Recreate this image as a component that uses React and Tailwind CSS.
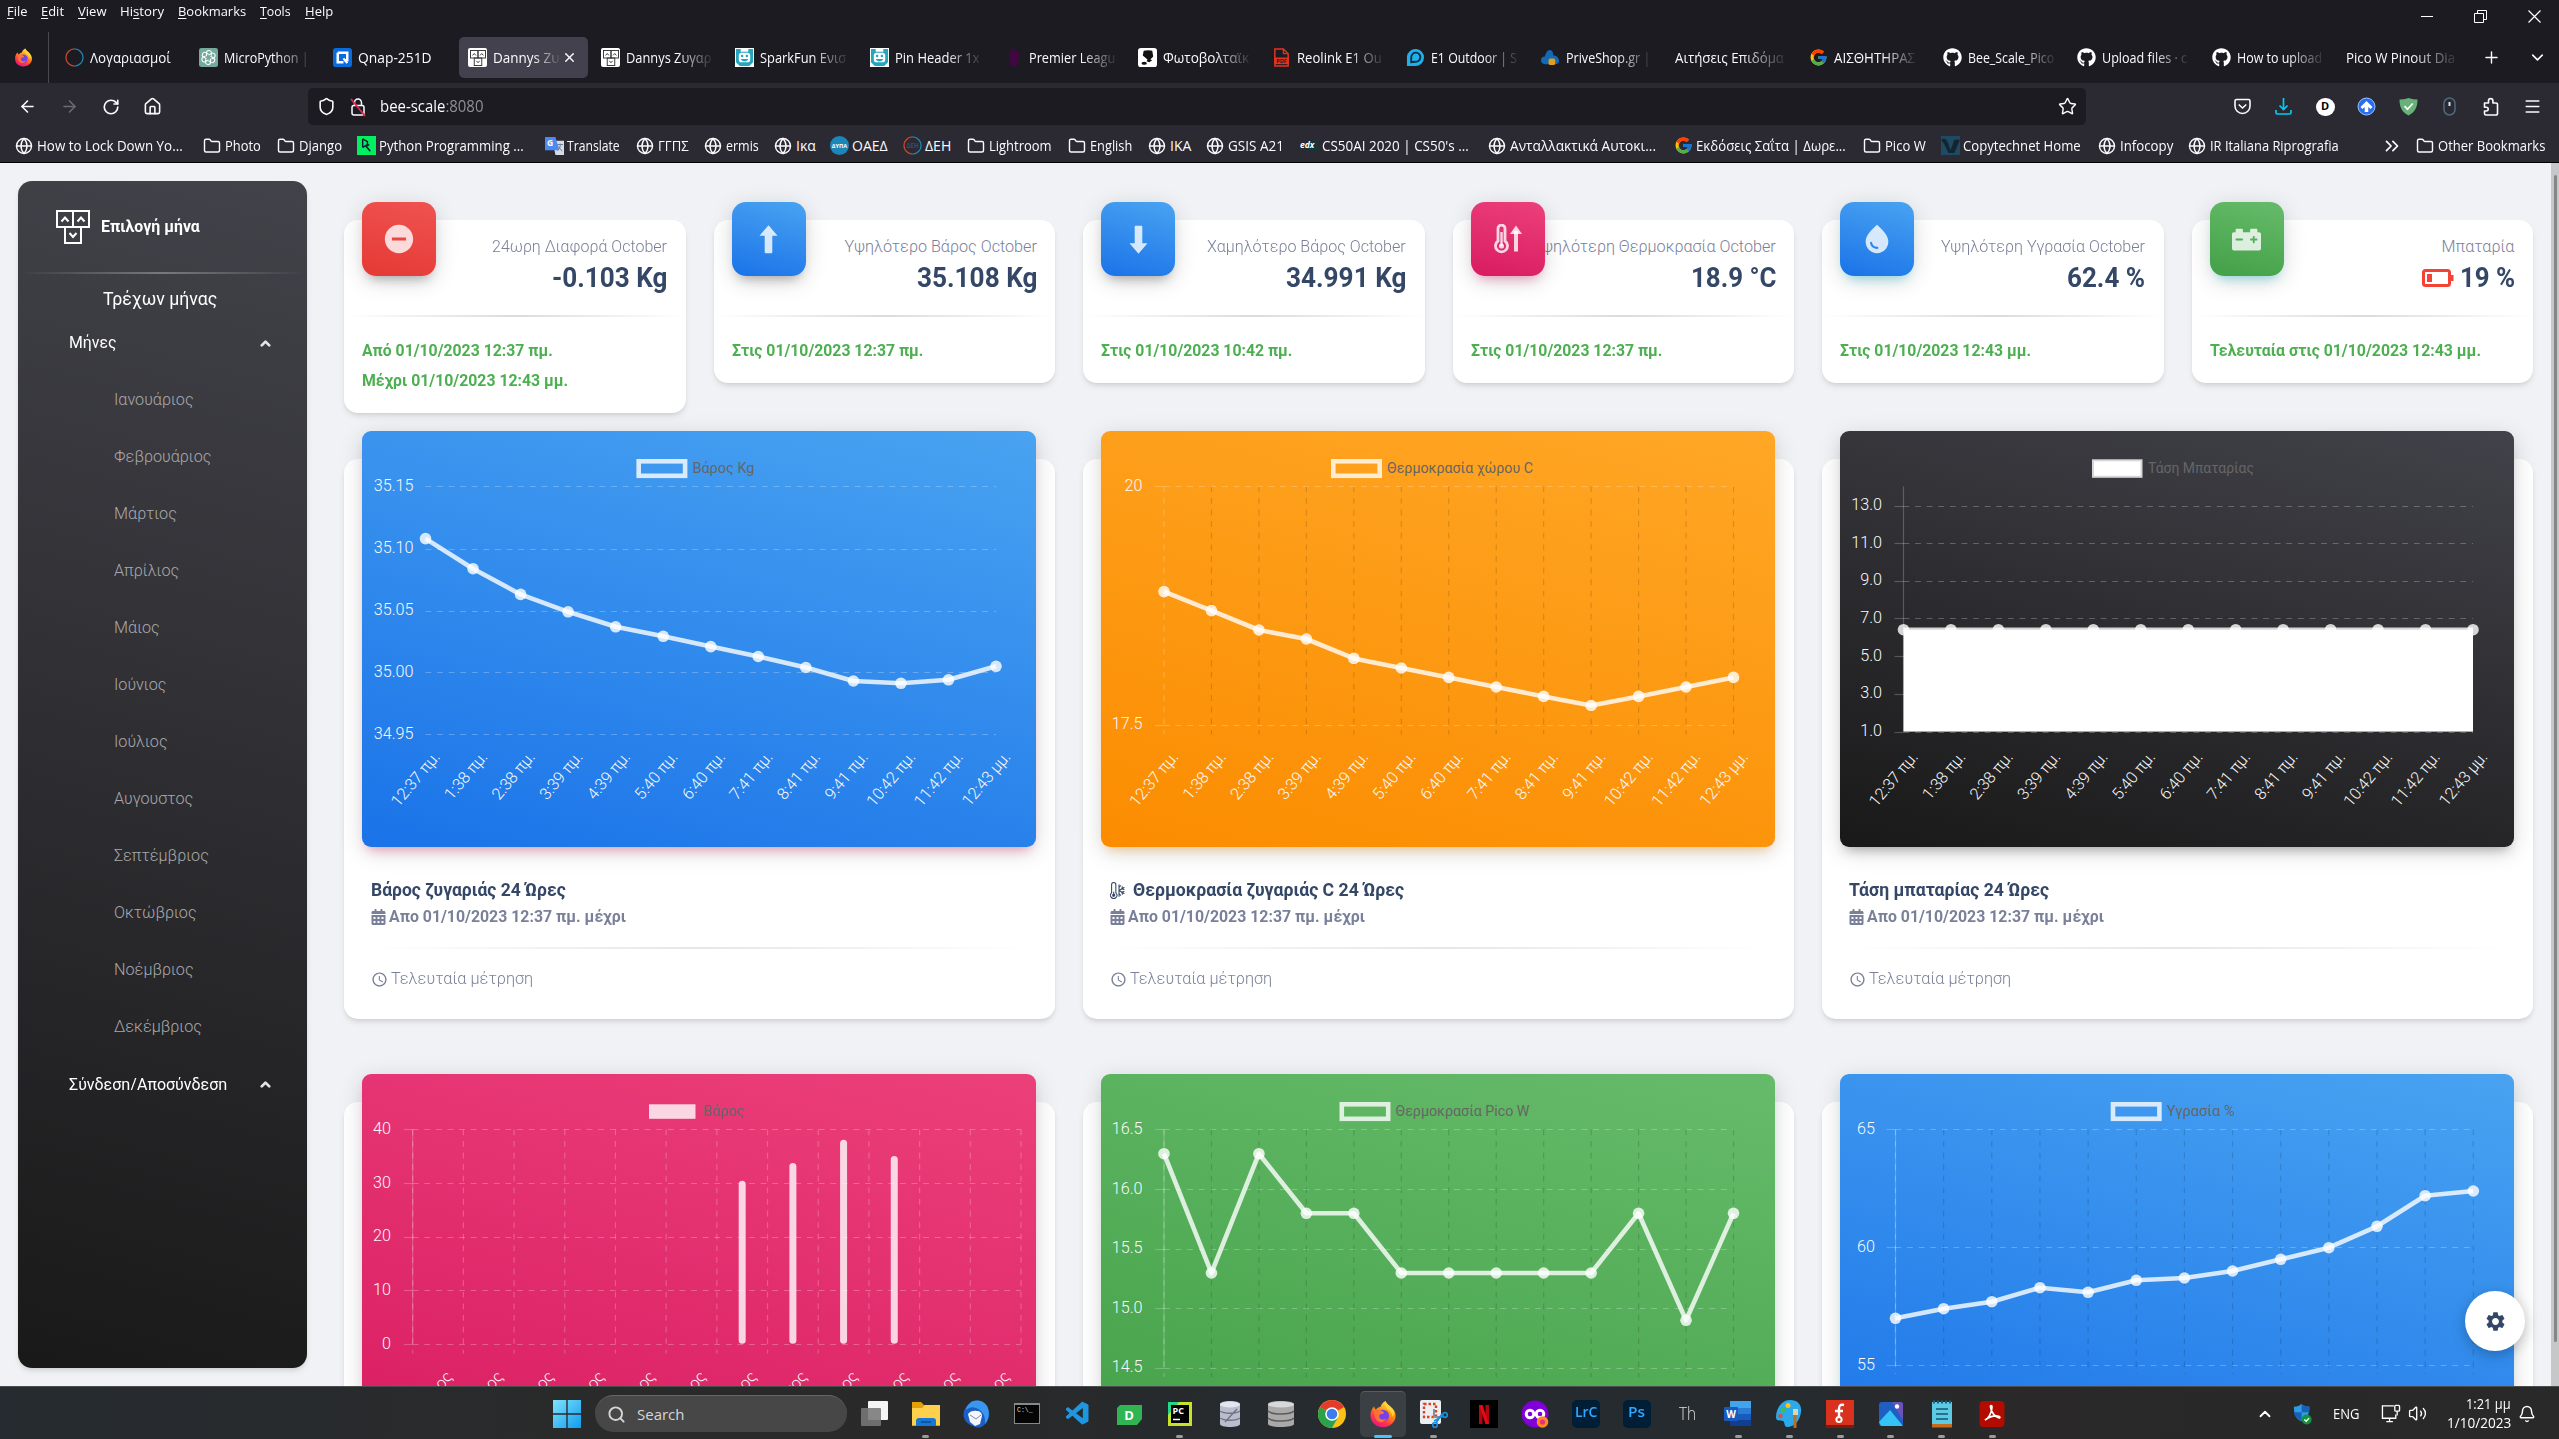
import React, { useLayoutEffect, useRef } from "react";
import {
  ArrowLeft, ArrowRight, RotateCw, House, Star, Plus, ChevronDown, ChevronUp, X, Menu, Globe, Folder,
  ChevronsRight, Search, Bell, Volume2, Shield,
} from "lucide-react";
import { FaGithub, FaCarBattery, FaCalendarAlt } from "react-icons/fa";
import { FcGoogle } from "react-icons/fc";
import { MdRemoveCircle, MdWaterDrop, MdSettings, MdSchedule } from "react-icons/md";
import { BsThermometerSnow } from "react-icons/bs";
import { VscVscode } from "react-icons/vsc";

/* Text squeezed or stretched to a known width. */
function Fit({ w, className = "", children }) {
  const ref = useRef(null);
  useLayoutEffect(() => {
    const el = ref.current;
    el.style.transform = `scaleX(${w / el.offsetWidth})`;
  }, [w]);
  return (
    <span className="inline-block shrink-0 whitespace-nowrap" style={{ width: w }}>
      <span ref={ref} className={`inline-block origin-left whitespace-nowrap ${className}`}>{children}</span>
    </span>
  );
}

/* ---------- small drawings ---------- */
const ScaleLogo = ({ className }) => (
  <svg viewBox="0 0 34 34" className={className} fill="none" stroke="currentColor" strokeWidth="2">
    <rect x="1" y="1" width="16" height="16" />
    <rect x="17" y="1" width="16" height="16" />
    <rect x="9" y="17" width="16" height="16" />
    <path d="M5.500 11.500 9 7.500l3.500 4M21.500 11.500 25 7.500l3.500 4M13.500 23l3.500 4 3.500-4" />
  </svg>
);

const Firefox = ({ className }) => (
  <svg viewBox="0 0 32 32" className={className}>
    <defs>
      <linearGradient id="fx" x1="0.8" y1="0" x2="0.3" y2="1">
        <stop offset="0" stopColor="#fff44f" />
        <stop offset="0.4" stopColor="#ff980e" />
        <stop offset="0.75" stopColor="#ff3647" />
        <stop offset="1" stopColor="#e31587" />
      </linearGradient>
    </defs>
    <path d="M19 1c1 4 5 5 8 9 3 3 4 7 3 11-2 6-7 10-14 10S3 27 2 20c-1-5 1-10 4-13 0 2 1 3 2 4 1-2 3-3 5-3 1-3 3-6 6-7z" fill="url(#fx)" />
    <circle cx="16" cy="18" r="7" fill="#7542e5" />
    <path d="M6 12c4-2 7 0 10 1 2 1 1 3-1 3-3 0-4 2-3 4 1 3 5 3 8 1-2 5-9 6-12 1-2-3-2-7-2-10z" fill="#ff7139" />
    <path d="M19 1c1 4 5 5 8 9 2 3 2 7 0 9-1-5-4-7-6-9-3-3-3-6-2-9z" fill="#ffd43a" />
  </svg>
);

const Ring = ({ className, label }) => (
  <svg viewBox="0 0 20 20" className={className}>
    <path d="M10 1a9 9 0 0 0 0 18" fill="none" stroke="#c9472b" strokeWidth="1.4" />
    <path d="M10 1a9 9 0 0 1 0 18" fill="none" stroke="#1d86b5" strokeWidth="1.4" />
    {label && <text x="10" y="12.500" fontSize="6.500" fill="#24536e" textAnchor="middle" fontFamily="Open Sans" fontWeight="700">ΔΕΗ</text>}
  </svg>
);

const OpenAi = ({ className }) => (
  <svg viewBox="0 0 20 20" className={className}>
    <rect width="20" height="20" rx="2.500" fill="#74aa9c" />
    <g fill="none" stroke="#fff" strokeWidth="1.1">
      {[0, 60, 120, 180, 240, 300].map((a) => (
        <path key={a} d="M10 7.500 13 5.800a2.600 2.600 0 0 1 2.800 4.400L13 11.700" transform={`rotate(${a} 10 10)`} />
      ))}
    </g>
  </svg>
);

const Spark = ({ className }) => (
  <svg viewBox="0 0 20 20" className={className}>
    <rect width="20" height="20" fill="#fff" />
    <path d="M1 1h5v3h8V1h5v14l-4 4H5l-4-4z" fill="#27a5bf" />
    <rect x="4" y="5" width="12" height="10" rx="3" fill="#fff" />
    <circle cx="7.500" cy="8.500" r="1.300" fill="#27a5bf" />
    <circle cx="12.500" cy="8.500" r="1.300" fill="#27a5bf" />
    <path d="M6 11.500h8c-1 3.500-7 3.500-8 0z" fill="#27a5bf" />
  </svg>
);

const TabIcon = ({ kind }) => {
  const c = "w-[19px] h-[19px] shrink-0";
  switch (kind) {
    case "ring": return <Ring className={c} />;
    case "ai": return <OpenAi className={c} />;
    case "qnap":
      return (
        <svg viewBox="0 0 20 20" className={c}>
          <rect width="20" height="20" rx="3" fill="#0a6cdc" />
          <path d="M5 5h10v8h-3M5 5v10h6" fill="none" stroke="#fff" strokeWidth="2.600" />
          <path d="m11 11 4 5" stroke="#fff" strokeWidth="2.200" />
        </svg>
      );
    case "scale":
      return (
        <span className={`${c} flex items-center justify-center rounded-[2px] bg-white text-[#333]`}>
          <ScaleLogo className="h-[16px] w-[16px]" />
        </span>
      );
    case "spark": return <Spark className={c} />;
    case "lion":
      return (
        <svg viewBox="0 0 20 20" className={c}>
          <path d="M7 4 6 1l3 2 1-3 1.500 3L14 1v4c3 2 3 5 1 7l-1 6-4 2-4-3 1-4C4 11 5 6 7 4z" fill="#420742" />
        </svg>
      );
    case "bulb":
      return (
        <svg viewBox="0 0 20 20" className={c}>
          <rect width="20" height="20" rx="3" fill="#fff" />
          <path d="M6 3c3-1 7-1 9 0l1 6-3 3 2 1-3 2-3-1 1-2-5-4z" fill="#111" />
          <ellipse cx="6.500" cy="16" rx="2.800" ry="1.600" fill="#111" />
        </svg>
      );
    case "pdf":
      return (
        <svg viewBox="0 0 20 20" className={c}>
          <path d="M3 1h9l5 5v13H3z" fill="none" stroke="#e2341d" strokeWidth="1.600" />
          <path d="M12 1v5h5" fill="none" stroke="#e2341d" strokeWidth="1.400" />
          <rect x="2.500" y="10" width="15" height="7" fill="#e2341d" />
          <text x="10" y="15.800" fontSize="5.800" fontWeight="700" textAnchor="middle" fill="#1c1b22" fontFamily="Open Sans">PDF</text>
        </svg>
      );
    case "reo":
      return (
        <svg viewBox="0 0 20 20" className={c}>
          <path d="M1 19V9a9 9 0 1 1 9 10z" fill="#1fb0ee" />
          <path d="M5.500 15V9.500A4.800 4.800 0 1 1 10 14.500z" fill="none" stroke="#12313f" strokeWidth="2" />
          <circle cx="10" cy="9.500" r="2" fill="#1fb0ee" />
        </svg>
      );
    case "prive":
      return (
        <svg viewBox="0 0 20 20" className={c}>
          <path d="M9 2c3 0 4 3 4 6 3 0 6 2 6 6 0 2-2 3-4 3H4c-2 0-4-1-4-4 0-3 2-4 4-4 1-4 3-7 5-7z" fill="#1269b5" />
          <rect x="8" y="11" width="7" height="7" rx="2" fill="#e59b1c" />
        </svg>
      );
    case "google": return <FcGoogle className={c} />;
    case "github": return <FaGithub className={`${c} text-white`} />;
    default: return null;
  }
};

const TABS = [
  ["ring", "Λογαριασμοί", 81], ["ai", "MicroPython |", 85, 1], ["qnap", "Qnap-251D", 73.5], ["scale", "Dannys Ζυ", 66, 1, 1],
  ["scale", "Dannys Ζυγαρ", 85, 1], ["spark", "SparkFun Ενισ", 86, 1], ["spark", "Pin Header 1x", 85, 1],
  ["lion", "Premier Leagu", 86, 1], ["bulb", "Φωτοβολταϊκ", 86, 1], ["pdf", "Reolink E1 Ou", 85, 1],
  ["reo", "E1 Outdoor | S", 86, 1], ["prive", "PriveShop.gr |", 84, 1], [null, "Αιτήσεις Επιδόμα", 109, 1],
  ["google", "ΑΙΣΘΗΤΗΡΑΣ", 81, 1], ["github", "Bee_Scale_Pico", 86, 1], ["github", "Upload files · c", 85, 1],
  ["github", "How to upload", 85, 1], [null, "Pico W Pinout Dia", 109, 1],
];

const MENUS = [
  ["F", "ile", "", 20, "w-[34px]"], ["E", "dit", "", 23, "w-[37px]"], ["V", "iew", "", 29, "w-[42px]"],
  ["s", "tory", "Hi", 44, "w-[58px]"], ["B", "ookmarks", "", 68, "w-[82px]"], ["T", "ools", "", 31, "w-[45px]"],
  ["H", "elp", "", 28, "w-[40px]"],
];

const BOOKMARKS = [
  ["globe", "How to Lock Down Yo...", 146, "w-[188px]"], ["folder", "Photo", 36, "w-[74px]"],
  ["folder", "Django", 43, "w-[80px]"], ["dc", "Python Programming ...", 145, "w-[188px]"],
  ["translate", "Translate", 53, "w-[91px]"], ["globe", "ΓΓΠΣ", 31, "w-[68px]"], ["globe", "ermis", 33, "w-[70px]"],
  ["globe", "Ικα", 20, "w-[56px]"], ["oaed", "ΟΑΕΔ", 36, "w-[73px]"], ["deh", "ΔΕΗ", 26, "w-[64px]"],
  ["folder", "Lightroom", 63, "w-[101px]"], ["folder", "English", 42, "w-[80px]"], ["globe", "IKA", 21, "w-[58px]"],
  ["globe", "GSIS A21", 56, "w-[94px]"], ["edx", "CS50AI 2020 | CS50's ...", 147, "w-[188px]"],
  ["globe", "Ανταλλακτικά Αυτοκι...", 146, "w-[186px]"], ["google", "Εκδόσεις Σαΐτα | Δωρε...", 150, "w-[189px]"],
  ["folder", "Pico W", 41, "w-[78px]"], ["copy", "Copytechnet Home", 118, "w-[157px]"],
  ["globe", "Infocopy", 53, "w-[90px]"], ["globe", "IR Italiana Riprografia", 129, "w-[196px]"],
];

const BookmarkIcon = ({ kind }) => {
  const c = "w-[19px] h-[19px] shrink-0";
  switch (kind) {
    case "globe": return <Globe className="h-[18px] w-[18px] shrink-0" strokeWidth={1.9} />;
    case "folder": return <Folder className="h-[18px] w-[18px] shrink-0" strokeWidth={1.9} />;
    case "dc":
      return (
        <svg viewBox="0 0 20 20" className={c}>
          <rect width="20" height="20" fill="#03ef62" />
          <path d="M6 3v9M6 3l5 3v3l-5 3M9 11l4-2M9 10l5 6" fill="none" stroke="#05192d" strokeWidth="1.500" />
        </svg>
      );
    case "translate":
      return (
        <svg viewBox="0 0 20 20" className={c}>
          <path d="M8 5h12v15h-9z" fill="#d7dbe2" />
          <path d="M0 1h11l4 14H0z" fill="#4a8af4" />
          <text x="5.500" y="11" fontSize="9" fill="#fff" textAnchor="middle" fontFamily="Open Sans" fontWeight="700">G</text>
          <path d="M13 9h6M16 8v2c0 2-1 4-3 5M14 11l4 5" stroke="#68788f" fill="none" />
        </svg>
      );
    case "oaed":
      return (
        <svg viewBox="0 0 20 20" className={c}>
          <circle cx="10" cy="10" r="10" fill="#1c86b8" />
          <text x="10" y="12.500" fontSize="6" fill="#fff" textAnchor="middle" fontFamily="Open Sans" fontWeight="700">ΔΥΠΑ</text>
        </svg>
      );
    case "deh": return <Ring className={c} label />;
    case "edx":
      return (
        <svg viewBox="0 0 20 20" className={c}>
          <path d="M8 5h11v11H8z" fill="#14363b" />
          <text x="0" y="13" fontSize="9" fill="#fff" fontFamily="Open Sans" fontStyle="italic" fontWeight="700">edx</text>
        </svg>
      );
    case "google": return <FcGoogle className={c} />;
    case "copy":
      return (
        <svg viewBox="0 0 20 20" className={c}>
          <rect width="20" height="20" fill="#1f4a63" />
          <path d="M0 4c4-3 7 1 8 5l2 6 4-11h6l-6 14H8L3 8z" fill="#132630" />
        </svg>
      );
    default: return null;
  }
};

function BrowserChrome() {
  return (
    <div className="flex h-[163px] shrink-0 flex-col bg-[#1c1b22] font-['Open_Sans',sans-serif] text-[14.500px] text-[#fbfbfe]">
      <div className="flex h-[32px] justify-between">
        <div className="flex h-[23px] items-center pl-[7px] text-[13.500px]">
          {MENUS.map(([u, rest, pre, w, cls]) => (
            <div key={rest} className={cls}>
              <Fit w={w}>{pre}<span className="underline underline-offset-2">{u}</span>{rest}</Fit>
            </div>
          ))}
        </div>
        <div className="flex items-center gap-[41px] pr-[18px]">
          <span className="h-px w-[12px] bg-white" />
          <svg viewBox="0 0 13 13" className="h-[13px] w-[13px]" fill="none" stroke="#fff">
            <path d="M.5 3.500h9v9h-9zM3.500 3.500v-3h9v9h-3" />
          </svg>
          <svg viewBox="0 0 13 13" className="h-[13px] w-[13px]" fill="none" stroke="#fff" strokeWidth="1.200">
            <path d="m.5.5 12 12M12.500.5l-12 12" />
          </svg>
        </div>
      </div>
      <div className="flex h-[51px] items-center">
        <div className="flex h-full w-[49px] shrink-0 items-center border-r border-[#4a4953] pl-[14px]">
          <Firefox className="h-[19px] w-[19px]" />
        </div>
        <div className="flex pl-[5.500px]">
          {TABS.map(([icon, label, w, fade, active], i) => (
            <div key={i} className="w-[134.200px] shrink-0 pl-[2px] pr-[3px]">
              <div className={`flex h-[41px] items-center rounded-[5px] ${active ? "bg-[#42414d] pl-[9px]" : "pl-[8px]"}`}>
                {icon && <span className="mr-[6px] flex"><TabIcon kind={icon} /></span>}
                <div className={fade ? "[mask-image:linear-gradient(to_right,black_60%,rgba(0,0,0,0.1))]" : ""}>
                  <Fit w={w}>{label}</Fit>
                </div>
                {active && <X className="ml-[3px] h-[15px] w-[15px] shrink-0" strokeWidth={2.2} />}
              </div>
            </div>
          ))}
        </div>
        <Plus className="ml-[12px] h-[19px] w-[19px]" strokeWidth={1.8} />
        <ChevronDown className="ml-[27px] h-[19px] w-[19px]" strokeWidth={2} />
      </div>
      <div className="flex h-[46px] shrink-0 items-center bg-[#2b2a33] pt-px">
        <div className="flex w-[308px] shrink-0 items-center gap-[23px] pl-[18px]">
          <ArrowLeft className="h-[19px] w-[19px]" strokeWidth={2} />
          <ArrowRight className="h-[19px] w-[19px] text-[#6c6b74]" strokeWidth={2} />
          <RotateCw className="h-[18px] w-[18px]" strokeWidth={2.2} />
          <House className="h-[19px] w-[19px]" strokeWidth={2} />
        </div>
        <div className="flex h-[37px] w-[1778px] shrink-0 items-center rounded-[5px] bg-[#1c1b22] pl-[9px] pr-[9px]">
          <Shield className="h-[19px] w-[19px]" strokeWidth={2} />
          <svg viewBox="0 0 18 20" className="ml-[13px] h-[20px] w-[18px]" fill="none">
            <rect x="3" y="8.500" width="12" height="9.500" rx="2" stroke="#fbfbfe" strokeWidth="1.500" />
            <path d="M5.500 8V5.500a3.500 3.500 0 0 1 7 0V8" stroke="#fbfbfe" strokeWidth="1.500" />
            <path d="m2 2 14 17" stroke="#e22850" strokeWidth="1.800" />
          </svg>
          <span className="ml-[13px] text-[15.500px]"><Fit w={103}>bee-scale<span className="text-[#8f8f97]">:8080</span></Fit></span>
          <Star className="ml-auto h-[19px] w-[19px]" strokeWidth={1.8} />
        </div>
        <div className="flex flex-1 items-center justify-end gap-[22.500px] pr-[17px]">
          <svg viewBox="0 0 19 19" className="h-[19px] w-[19px]" fill="none" stroke="#fbfbfe" strokeWidth="1.600">
            <path d="M3.500 2.500h12a1.500 1.500 0 0 1 1.500 1.500v5a7.500 7.500 0 0 1-15 0V4a1.500 1.500 0 0 1 1.500-1.500zM5.700 7.500l3.800 3.500 3.800-3.500" />
          </svg>
          <svg viewBox="0 0 19 19" className="h-[19px] w-[19px]" fill="none" stroke="#00ccf5" strokeWidth="1.700">
            <path d="M9.500 1v11M5.500 8.500l4 4 4-4M2 13v2.500A1.500 1.500 0 0 0 3.500 17h12a1.500 1.500 0 0 0 1.500-1.500V13" />
          </svg>
          <span className="flex h-[18px] w-[19px] items-center justify-center rounded-full bg-white text-[11px] font-bold text-black">D</span>
          <svg viewBox="0 0 19 19" className="h-[19px] w-[19px]">
            <circle cx="9.500" cy="9.500" r="8.500" fill="#2a6df0" stroke="#9cc4f6" />
            <path d="m3.500 10 6-6 6 6-2 2-2.200-2V15H7.700v-5l-2.200 2z" fill="#fff" />
          </svg>
          <svg viewBox="0 0 19 19" className="h-[19px] w-[19px]">
            <path d="M.5 2.500c3 0 6-.5 9-1.500 3 1 6 1.500 9 1.500 0 7-2 12.500-9 16-7-3.500-9-9-9-16z" fill="#67b279" />
            <path d="m5.500 9 3 3.200 5.200-5.700" fill="none" stroke="#fff" strokeWidth="1.700" />
          </svg>
          <svg viewBox="0 0 19 19" className="h-[19px] w-[19px]" fill="none">
            <rect x="4" y="1" width="11" height="17" rx="5.500" stroke="#4d6b7d" strokeWidth="1.500" />
            <path d="M9.500 5v4" stroke="#dce6ec" strokeWidth="2" />
          </svg>
          <svg viewBox="0 0 19 19" className="h-[19px] w-[19px]" fill="none" stroke="#fbfbfe" strokeWidth="1.600" strokeLinejoin="round">
            <path d="M2.500 6h4V3.800a2.200 2.200 0 0 1 4.400 0V6H14a1.500 1.500 0 0 1 1.500 1.500v9A1.500 1.500 0 0 1 14 18H4a1.500 1.500 0 0 1-1.500-1.500V14h1.800a1.900 1.900 0 0 0 0-3.800H2.500z" />
          </svg>
          <Menu className="h-[19px] w-[19px]" strokeWidth={1.8} />
        </div>
      </div>
      <div className="flex h-[34px] items-center border-b border-black bg-[#2b2a33] pl-[14.500px] text-[14px]">
        {BOOKMARKS.map(([icon, label, w, cls]) => (
          <div key={label} className={`flex shrink-0 items-center ${cls}`}>
            <span className="flex w-[22.500px] shrink-0"><BookmarkIcon kind={icon} /></span>
            <Fit w={w}>{label}</Fit>
          </div>
        ))}
        <ChevronsRight className="-ml-[3px] h-[22px] w-[22px]" strokeWidth={1.9} />
        <div className="ml-[13px] flex items-center">
          <span className="w-[22px]"><BookmarkIcon kind="folder" /></span>
          <Fit w={107}>Other Bookmarks</Fit>
        </div>
      </div>
    </div>
  );
}

/* ---------- sidebar ---------- */
const MONTHS = ["Ιανουάριος", "Φεβρουάριος", "Μάρτιος", "Απρίλιος", "Μάιος", "Ιούνιος", "Ιούλιος", "Αυγουστος", "Σεπτέμβριος", "Οκτώβριος", "Νοέμβριος", "Δεκέμβριος"];

function Sidebar() {
  return (
    <aside className="ml-[18px] mt-[18px] flex h-[1187px] w-[289px] shrink-0 flex-col rounded-[14px] bg-[linear-gradient(195deg,#42424a,#191919)] text-[16.500px] text-white shadow-md">
      <div className="flex h-[91px] items-center pl-[38px] pt-px">
        <ScaleLogo className="h-[34px] w-[34px]" />
        <span className="ml-[11px]"><Fit w={99} className="text-[16.200px] font-bold">Επιλογή μήνα</Fit></span>
      </div>
      <div className="h-[2px] shrink-0 bg-[linear-gradient(90deg,transparent,rgba(255,255,255,0.3),transparent)]" />
      <div className="flex h-[51px] items-center pl-[85px] pt-px"><Fit w={114} className="text-[18.500px]">Τρέχων μήνας</Fit></div>
      <div className="flex h-[36px] items-center justify-between pl-[51px] pr-[34px]">
        <Fit w={48}>Μήνες</Fit>
        <ChevronUp className="h-[15px] w-[15px] text-[#e4e4e4]" strokeWidth={4.5} />
      </div>
      <div className="flex flex-col pt-[11px] font-light text-[#a9a9ab]">
        {MONTHS.map((m) => (
          <div key={m} className="flex h-[57px] items-center pl-[96px] text-[16.200px]">{m}</div>
        ))}
      </div>
      <div className="mt-[14px] h-[20px] overflow-hidden">
        <div className="flex h-[30px] items-center justify-between pl-[51px] pr-[34px]">
          <Fit w={158}>Σύνδεση/Αποσύνδεση</Fit>
          <ChevronUp className="mb-[2px] h-[15px] w-[15px] text-[#e4e4e4]" strokeWidth={4.5} />
        </div>
      </div>
    </aside>
  );
}

/* ---------- stat cards ---------- */
const Divider = ({ className = "" }) => (
  <div className={`h-[1.500px] bg-[linear-gradient(90deg,transparent,rgba(0,0,0,0.14),transparent)] ${className}`} />
);

const ArrowBold = ({ className }) => (
  <svg viewBox="0 0 20 30" className={className} fill="currentColor">
    <path d="M10 0 19.500 11H14v17.500a1 1 0 0 1-1 1H7a1 1 0 0 1-1-1V11H.5z" />
  </svg>
);

const ThermoUp = ({ className }) => (
  <svg viewBox="0 0 30 30" className={className} fill="none" stroke="currentColor">
    <path d="M5 4.500a3.500 3.500 0 0 1 7 0V17a6 6 0 1 1-7 0z" strokeWidth="2.800" />
    <circle cx="8.500" cy="22" r="2.600" fill="currentColor" stroke="none" />
    <path d="M8.500 8v14" strokeWidth="2.400" />
    <path d="M23 27.500V7" strokeWidth="4" />
    <path d="m23 1.500 6 8.500H17z" fill="currentColor" stroke="none" />
  </svg>
);

const BLUE = "bg-[linear-gradient(195deg,#49a3f1,#1a73e8)]";
const PINK = "bg-[linear-gradient(195deg,#ec407a,#d81b60)]";
const GREEN = "bg-[linear-gradient(195deg,#66bb6a,#43a047)]";
const RED = "bg-[linear-gradient(195deg,#ef5350,#e53935)]";
const ORANGE = "bg-[linear-gradient(195deg,#ffa726,#fb8c00)]";
const DARK = "bg-[linear-gradient(195deg,#42424a,#191919)]";
const SH_DARK = "shadow-[0_5px_23px_0_rgba(0,0,0,0.14),0_8px_12px_-6px_rgba(64,64,64,0.4)]";
const SH_PINK = "shadow-[0_5px_23px_0_rgba(0,0,0,0.14),0_8px_12px_-6px_rgba(233,30,99,0.4)]";
const SH_CYAN = "shadow-[0_5px_23px_0_rgba(0,0,0,0.14),0_8px_12px_-6px_rgba(0,188,212,0.4)]";
const SH_ORANGE = "shadow-[0_5px_23px_0_rgba(0,0,0,0.14),0_8px_12px_-6px_rgba(255,152,0,0.4)]";
const SH_GREEN = "shadow-[0_5px_23px_0_rgba(0,0,0,0.14),0_8px_12px_-6px_rgba(76,175,80,0.4)]";

const STATS = [
  { bg: RED, sh: SH_DARK, icon: <MdRemoveCircle className="h-[34px] w-[34px]" />, label: "24ωρη Διαφορά October", lw: 175, value: "-0.103 Kg", vw: 115, lines: [["Από 01/10/2023 12:37 πμ.", 191], ["Μέχρι 01/10/2023 12:43 μμ.", 206]] },
  { bg: BLUE, sh: SH_DARK, icon: <ArrowBold className="h-[29px] w-[19px]" />, label: "Υψηλότερο Βάρος October", lw: 192, value: "35.108 Kg", vw: 120, lines: [["Στις 01/10/2023 12:37 πμ.", 191]] },
  { bg: BLUE, sh: SH_DARK, icon: <ArrowBold className="h-[29px] w-[19px] rotate-180" />, label: "Χαμηλότερο Βάρος October", lw: 199, value: "34.991 Kg", vw: 120, lines: [["Στις 01/10/2023 10:42 πμ.", 191]] },
  { bg: PINK, sh: SH_PINK, icon: <ThermoUp className="h-[30px] w-[30px]" />, label: "Υψηλότερη Θερμοκρασία October", lw: 243, value: "18.9 °C", vw: 85, lines: [["Στις 01/10/2023 12:37 πμ.", 191]] },
  { bg: BLUE, sh: SH_CYAN, icon: <MdWaterDrop className="h-[34px] w-[34px]" />, label: "Υψηλότερη Υγρασία October", lw: 204, value: "62.4 %", vw: 78, lines: [["Στις 01/10/2023 12:43 μμ.", 191]] },
  { bg: GREEN, sh: SH_CYAN, icon: <FaCarBattery className="h-[29px] w-[29px]" />, label: "Μπαταρία", lw: 73, value: "19 %", vw: 55, battery: true, lines: [["Τελευταία στις 01/10/2023 12:43 μμ.", 271]] },
];

function StatCard({ s }) {
  return (
    <div className="relative rounded-[14px] bg-white shadow-md">
      <div className="flex h-[95px] flex-col items-end pr-[18.500px] pt-[14px]">
        <div className="flex h-[26px] items-center text-[16.200px] font-light text-[#7b809a]"><Fit w={s.lw}>{s.label}</Fit></div>
        <div className="flex h-[36px] items-center text-[27.700px] font-bold text-[#344767]">
          {s.battery && (
            <svg viewBox="0 0 32 18" className="mr-[6px] h-[18px] w-[32px] text-[#f44335]" fill="none" stroke="currentColor">
              <rect x="1.500" y="1.500" width="26" height="15" rx="2" strokeWidth="3" />
              <path d="M30 6v6" strokeWidth="3" />
              <path d="M7.500 5v8" strokeWidth="5" />
            </svg>
          )}
          <Fit w={s.vw}>{s.value}</Fit>
        </div>
      </div>
      <Divider />
      <div className="px-[18px] pb-[17px] pt-[19.500px] text-[16.200px] font-bold text-[#4caf50]">
        {s.lines.map(([t, w]) => (
          <div key={t} className="flex h-[30px] items-center"><Fit w={w}>{t}</Fit></div>
        ))}
      </div>
      <div className={`absolute -top-[18px] left-[18px] flex h-[74px] w-[74px] items-center justify-center rounded-[14px] text-white/80 ${s.bg} ${s.sh}`}>
        {s.icon}
      </div>
    </div>
  );
}

/* ---------- charts ---------- */
const TIMES = ["12:37 πμ.", "1:38 πμ.", "2:38 πμ.", "3:39 πμ.", "4:39 πμ.", "5:40 πμ.", "6:40 πμ.", "7:41 πμ.", "8:41 πμ.", "9:41 πμ.", "10:42 πμ.", "11:42 πμ.", "12:43 μμ."];

const CHARTS = [
  {
    id: "weight", bg: BLUE, sh: SH_PINK, title: "Βάρος ζυγαριάς 24 Ώρες", tw: 195, xLabels: TIMES,
    legend: "Βάρος Kg", lx: 274.4, lw: 62, x0: 63.5, x1: 634, top: 55.4, bottom: 303.4, labelX: 51.5,
    ys: [["35.15", 55.4], ["35.10", 117.5], ["35.05", 179.5], ["35.00", 241.4], ["34.95", 303.4]],
    pts: [107.6, 137.7, 163.4, 180.8, 195.8, 205.3, 215.6, 225.5, 236.5, 250, 252.3, 248.8, 235.3],
  },
  {
    id: "temp", bg: ORANGE, sh: SH_ORANGE, title: "Θερμοκρασία ζυγαριάς C 24 Ώρες", tw: 271, thermo: true, vgrid: "dark", ticks: true, xLabels: TIMES,
    legend: "Θερμοκρασία χώρου C", lx: 230, lw: 146, x0: 63, x1: 632.5, top: 55.4, bottom: 303.4, labelX: 41.5,
    ys: [["20", 55.4], ["17.5", 293.5]],
    pts: [160.6, 179.6, 199, 208, 227.4, 237, 246.4, 256, 265.4, 274.5, 265.4, 256, 246.4],
  },
  {
    id: "volt", bg: DARK, sh: SH_DARK, title: "Τάση μπαταρίας 24 Ώρες", tw: 200, ticks: true, area: true, axis: true, xLabels: TIMES,
    legend: "Τάση Μπαταρίας", lx: 252, lw: 106, x0: 63.5, x1: 633, top: 55.4, bottom: 300.6, labelX: 42,
    ys: [["13.0", 74.5], ["11.0", 112.4], ["9.0", 149.5], ["7.0", 187.4], ["5.0", 225], ["3.0", 262.5], ["1.0", 300.5]],
    pts: Array(13).fill(198.7),
  },
  {
    id: "months", bg: PINK, sh: SH_PINK, ticks: true, bars: true, axis: true, vgrid: "light", xLabels: MONTHS,
    legend: "Βάρος", lx: 285, lw: 41, x0: 50.7, x1: 659, top: 55.4, bottom: 279.5, labelX: 29,
    ys: [["40", 55.4], ["30", 109.4], ["20", 162.7], ["10", 216.4], ["0", 270.4]],
    pts: [],
  },
  {
    id: "pico", bg: GREEN, sh: SH_GREEN, ticks: true, vgrid: "dark", axis: true, xLabels: [],
    legend: "Θερμοκρασία Pico W", lx: 238.5, lw: 134, x0: 63, x1: 632.5, top: 55.4, bottom: 303, labelX: 41.5,
    ys: [["16.5", 55.4], ["16.0", 115.4], ["15.5", 174.6], ["15.0", 234.4], ["14.5", 293.5]],
    pts: [79.7, 199, 79.7, 139.3, 139.3, 199, 199, 199, 199, 199, 139.3, 246.3, 139.3],
  },
  {
    id: "humid", bg: BLUE, sh: SH_CYAN, ticks: true, vgrid: "dark", axis: true, xLabels: [],
    legend: "Υγρασία %", lx: 270.7, lw: 68, x0: 55.5, x1: 633.3, top: 55.4, bottom: 300, labelX: 35,
    ys: [["65", 55.4], ["60", 173.4], ["55", 291.4]],
    pts: [244.3, 234.7, 227.7, 213.7, 218.3, 206.3, 204, 197, 185.3, 173.7, 152.3, 121.7, 117],
  },
];

const BARS = [[6, 106.7], [7, 89], [8, 65.7], [9, 82]];

function Chart({ c }) {
  const n = 12;
  const step = (c.x1 - c.x0) / n;
  const px = (i) => c.x0 + step * i;
  const filled = c.area || c.bars;
  return (
    <svg viewBox="0 0 674 416" className="h-[416px] w-[674px] font-['Roboto',sans-serif]">
      {filled ? (
        <rect x={c.lx + 2} y="30.300" width="46.500" height="14.500" fill={c.area ? "#fff" : "rgba(255,255,255,.8)"} stroke={c.area ? "rgba(255,255,255,.8)" : "none"} strokeWidth="4" />
      ) : (
        <rect x={c.lx + 2.3} y="30.300" width="46.400" height="14.500" fill="none" stroke="rgba(255,255,255,.8)" strokeWidth="4.600" />
      )}
      <text x={c.lx + 56} y="41.500" fontSize="14.500" fill="#666" textLength={c.lw} lengthAdjust="spacingAndGlyphs">{c.legend}</text>
      {c.ys.map(([t, y]) => (
        <g key={t}>
          <path d={`M${c.x0} ${Math.round(y) + 0.5}H${c.x1}`} stroke="rgba(255,255,255,.25)" strokeWidth="1.200" strokeDasharray="5.800 5.800" />
          {c.ticks && <path d={`M${c.x0 - 9} ${Math.round(y) + 0.5}H${c.x0}`} stroke="rgba(255,255,255,.22)" strokeWidth="1.200" />}
          <text x={c.labelX} y={y + 4.5} fontSize="16.200" fontWeight="300" fill="#f8f9fa" textAnchor="end">{t}</text>
        </g>
      ))}
      {c.vgrid && Array.from({ length: n + 1 }, (_, i) => (
        <path key={i} d={`M${px(i)} ${c.top}V${c.bottom}`} strokeWidth="1.200" strokeDasharray="5.800 5.800"
          stroke={c.vgrid === "light" || i === 0 ? "rgba(255,255,255,.22)" : "rgba(0,0,0,.14)"} />
      ))}
      {c.axis && <path d={`M${c.x0} ${c.top}V${c.area ? c.bottom : c.ys[c.ys.length - 1][1]}`} stroke="rgba(255,255,255,.22)" strokeWidth="1.200" />}
      {c.area && <rect x={c.x0} y="198.700" width={c.x1 - c.x0} height={300.6 - 198.7} fill="#fff" />}
      {c.pts.length > 0 && (
        <polyline points={c.pts.map((y, i) => `${px(i)},${y}`).join(" ")} fill="none" stroke="rgba(255,255,255,.8)" strokeWidth="4.600" strokeLinejoin="round" />
      )}
      {c.pts.map((y, i) => <circle key={i} cx={px(i)} cy={y} r="5.800" fill="rgba(255,255,255,.8)" />)}
      {c.bars && BARS.map(([i, y]) => (
        <rect key={i} x={px(i + 0.5) - 3.5} y={y} width="7" height={269.8 - y} rx="3.500" fill="rgba(255,255,255,.8)" />
      ))}
      {c.xLabels.map((t, i) => {
        const x = px(c.bars ? i + 0.5 : i) + 12;
        const y = c.bars ? 300 : 323.5;
        return (
          <text key={t} x={x} y={y} transform={`rotate(-50 ${x} ${y})`} dominantBaseline="middle" textAnchor="end" fontSize="16.200" fontWeight="300" fill="#f8f9fa">{t}</text>
        );
      })}
    </svg>
  );
}

function ChartCard({ c }) {
  return (
    <div className="h-[560px] rounded-[14px] bg-white px-[18px] shadow-md">
      <div className={`relative -mt-[28px] h-[416px] w-[674px] rounded-[9px] ${c.bg} ${c.sh}`}><Chart c={c} /></div>
      {c.title && (
        <div className="px-[9px] pt-[30px] text-[#7b809a]">
          <div className="flex h-[27px] items-center text-[18.500px] font-bold text-[#344767]">
            {c.thermo && <BsThermometerSnow className="mr-[6px] h-[17px] w-[17px]" />}
            <Fit w={c.tw}>{c.title}</Fit>
          </div>
          <div className="flex h-[26px] items-center pt-px text-[16.200px] font-bold">
            <FaCalendarAlt className="mb-px mr-[3px] h-[16px] w-[15px]" />
            <Fit w={237}>Απο 01/10/2023 12:37 πμ. μέχρι</Fit>
          </div>
          <Divider className="mt-[17px] opacity-70" />
          <div className="mt-[16px] flex h-[30px] items-center text-[16.200px] font-light">
            <MdSchedule className="mr-[3px] h-[17px] w-[17px]" />
            <Fit w={142}>Τελευταία μέτρηση</Fit>
          </div>
        </div>
      )}
    </div>
  );
}

/* ---------- taskbar ---------- */
const Sq = ({ children, className = "" }) => (
  <span className={`flex h-[28px] w-[28px] items-center justify-center ${className}`}>{children}</span>
);

const TASKS = [
  { k: "view", el: <svg viewBox="0 0 28 28" className="h-7 w-7"><rect x="7" y="1" width="20" height="19" rx="1" fill="#f4f4f4" /><rect x="0" y="8" width="20" height="18" rx="1" fill="#777" fillOpacity=".88" /></svg> },
  { k: "files", dot: 1, el: <svg viewBox="0 0 28 28" className="h-7 w-7"><path d="M0 2h9l3 3h16v21H0z" fill="#e3a008" /><path d="M0 8h10l3-3h15v20H0z" fill="#ffd04c" /><path d="M4 26v-5a3 3 0 0 1 3-3h14a3 3 0 0 1 3 3v5z" fill="#1478d4" /><path d="M9 22h10" stroke="#0b4c8c" strokeWidth="1.500" /></svg> },
  { k: "tbird", el: <svg viewBox="0 0 28 28" className="h-7 w-7"><path d="M8 3c5-4 13-3 17 3 4 7 3 15-4 20-3 2-7 2-10 0C4 24 0 18 2 11c1-3 3-6 6-8z" fill="#1c5fc4" /><path d="M8 3c5-4 13-3 17 3 3 6 2 13-2 18 1-8-3-14-9-16C10 6 6 8 4 10c0-3 2-5 4-7z" fill="#3a96ee" /><path d="M6 14c2-3 6-4 9-3 3 0 5 2 5 5l-2 8-5 2-5-4z" fill="#f4f6fb" /><path d="m8 15 6 4 5-4" fill="none" stroke="#5b6ea0" strokeWidth=".8" /></svg> },
  { k: "term", el: <svg viewBox="0 0 28 28" className="h-7 w-7"><rect x="1" y="3" width="26" height="21" fill="#888" /><rect x="2" y="5" width="24" height="18" fill="#050505" /><text x="4" y="12" fontSize="6.500" fill="#ddd" fontFamily="Liberation Mono">C:\_</text></svg> },
  { k: "code", el: <VscVscode className="h-[28px] w-[28px] text-[#1e96e0]" /> },
  { k: "dash", el: <svg viewBox="0 0 28 28" className="h-7 w-7"><path d="M5 5h22v14l-5 6H2V8z" fill="#2fb552" /><text x="14" y="19.500" fontSize="13" fontWeight="700" textAnchor="middle" fill="#fff" fontFamily="Open Sans">D</text></svg> },
  { k: "pycharm", dot: 1, el: <svg viewBox="0 0 28 28" className="h-7 w-7"><path d="M2 2h24v24H2z" fill="#c6e32a" /><path d="M2 2h11L2 15z" fill="#21d789" /><rect x="5" y="5" width="18" height="18" fill="#000" /><text x="6.500" y="14" fontSize="9" fontWeight="700" fill="#fff" fontFamily="Open Sans">PC</text><path d="M7 19.500h7" stroke="#fff" strokeWidth="1.500" /></svg> },
  { k: "db1", el: <svg viewBox="0 0 28 28" className="h-7 w-7"><path d="M4 4c0-4 20-4 20 0v20c0 4-20 4-20 0z" fill="#b9bdcc" /><ellipse cx="14" cy="4.500" rx="10" ry="3" fill="#e3e6f0" /><path d="M4 11c4 3 16 3 20 0M4 18c4 3 16 3 20 0M9 22l12-13" stroke="#6d7285" fill="none" strokeWidth="1.300" /></svg> },
  { k: "db2", el: <svg viewBox="0 0 28 28" className="h-7 w-7"><path d="M1 4c0-4 26-4 26 0v20c0 4-26 4-26 0z" fill="#a9a9a9" /><ellipse cx="14" cy="4.500" rx="13" ry="3" fill="#d8d8d8" /><path d="M1 11c4 4 22 4 26 0M1 18c4 4 22 4 26 0" stroke="#5c5c5c" fill="none" strokeWidth="1.600" /></svg> },
  { k: "chrome", el: <svg viewBox="0 0 28 28" className="h-7 w-7"><circle cx="14" cy="14" r="14" fill="#fbc116" /><path d="M14 14 1.900 7A14 14 0 0 1 26.100 7z" fill="#e33b2e" /><path d="M14 14 1.900 7a14 14 0 0 0 12 21l6-10.500z" fill="#2aa14c" /><circle cx="14" cy="14" r="6.800" fill="#fff" /><circle cx="14" cy="14" r="5.300" fill="#3b7ded" /></svg> },
  { k: "firefox", active: 1, el: <Firefox className="h-[28px] w-[28px]" /> },
  { k: "snip", dot: 1, el: <svg viewBox="0 0 28 28" className="h-7 w-7"><rect x="0" y="0" width="21" height="24" rx="2" fill="#eceff2" /><path d="M4 4h12v13H4z" fill="none" stroke="#d9431e" strokeWidth="2.400" strokeDasharray="2.500 2" /><path d="M14 9v8h6" fill="none" stroke="#8a8f94" strokeWidth="2" /><circle cx="15" cy="25" r="2.300" fill="none" stroke="#1a8fdc" strokeWidth="1.700" /><circle cx="25" cy="15" r="2.300" fill="none" stroke="#1a8fdc" strokeWidth="1.700" /><path d="M16 23l6-9M23 16l-9 5" stroke="#1a8fdc" strokeWidth="1.700" /></svg> },
  { k: "netflix", el: <svg viewBox="0 0 28 28" className="h-7 w-7"><rect width="28" height="28" fill="#000" /><path d="M9 5h3.500v19H9z" fill="#b20710" /><path d="M15.500 5H19v19h-3.500z" fill="#b20710" /><path d="M9 5h3.500L19 24h-3.500z" fill="#e50914" /></svg> },
  { k: "purple", el: <svg viewBox="0 0 28 28" className="h-7 w-7"><circle cx="14" cy="14" r="13.500" fill="#8000d7" /><circle cx="9" cy="14" r="3.800" fill="none" stroke="#fff" strokeWidth="3" /><circle cx="19" cy="14" r="3.800" fill="none" stroke="#fff" strokeWidth="3" /><circle cx="21.500" cy="22" r="5.800" fill="#ff8a1f" /><circle cx="21.500" cy="22" r="2.600" fill="#e3317f" /></svg> },
  { k: "lrc", el: <Sq className="rounded-[5px] bg-[#001e36] pb-[3px] text-[14.500px] font-semibold text-[#31a8ff]"><Fit w={22}>LrC</Fit></Sq> },
  { k: "ps", el: <Sq className="rounded-[5px] bg-[#001e36] pb-[3px] text-[14.500px] font-semibold text-[#31a8ff]"><Fit w={17}>Ps</Fit></Sq> },
  { k: "th", el: <Sq className="text-[18px] font-light text-[#dedede]"><Fit w={17}>Th</Fit></Sq> },
  { k: "word", dot: 1, el: <svg viewBox="0 0 28 28" className="h-7 w-7"><path d="M6 1h21v7H6z" fill="#41a5ee" /><path d="M6 8h21v6H6z" fill="#2b7cd3" /><path d="M6 14h21v6H6z" fill="#185abd" /><path d="M6 20h21v6H6z" fill="#103f91" /><rect x="0" y="7" width="14" height="14" rx="1" fill="#185abd" /><text x="7" y="18" fontSize="10" fontWeight="700" textAnchor="middle" fill="#fff" fontFamily="Open Sans">W</text></svg> },
  { k: "paint", dot: 1, el: <svg viewBox="0 0 28 28" className="h-7 w-7"><path d="M15 0c8 0 12 5 11 12-1 8-6 15-14 15-3 0-2-5-4-6s-7 1-7-4C1 8 7 0 15 0z" fill="#2ba9ea" /><circle cx="8" cy="10" r="2.500" fill="#3cc14e" /><circle cx="13" cy="5.500" r="2.500" fill="#ffc21c" /><circle cx="5.500" cy="16" r="2.200" fill="#e9483a" /><path d="M20 9v19" stroke="#b96f1f" strokeWidth="3" /><path d="M18 9h5v6h-5z" fill="#e6d2ad" /></svg> },
  { k: "f", dot: 1, el: <svg viewBox="0 0 28 28" className="h-7 w-7"><rect width="28" height="28" fill="#d8321f" /><rect y="25" width="28" height="3" fill="#7e1a0d" /><path d="M18 5c-4-1-5 1-5 4v8M9 11h8" stroke="#fff" strokeWidth="2.400" fill="none" /><circle cx="13" cy="19.500" r="2.600" fill="none" stroke="#fff" strokeWidth="2" /></svg> },
  { k: "photos", dot: 1, el: <svg viewBox="0 0 28 28" className="h-7 w-7"><rect x="2" y="2" width="24" height="24" rx="3" fill="#1f5fc4" /><path d="M15 2h8a3 3 0 0 1 3 3v15z" fill="#6b52b8" /><path d="m2 22 11-12 13 16H4z" fill="#35c2f4" /><circle cx="20" cy="6.500" r="2.200" fill="#fff" /></svg> },
  { k: "note", dot: 1, el: <svg viewBox="0 0 28 28" className="h-7 w-7"><rect x="4" y="2" width="20" height="23" fill="#5cc9e5" /><rect x="4" y="24" width="20" height="3.500" fill="#c76a1c" /><path d="M5 2h18" stroke="#1b617d" strokeWidth="3" strokeDasharray="2 2" /><path d="M8 9h12M8 14h12M8 19h12" stroke="#13566f" strokeWidth="1.700" /></svg> },
  { k: "acro", dot: 1, el: <svg viewBox="0 0 28 28" className="h-7 w-7"><rect x="1.500" y="1" width="25" height="26" rx="4" fill="#b30b00" /><path d="M7 20c3-1 7-7 7-13 0-2-2-2-1.500 0C13 12 17 17 21 18c1.500 0 1-2-1-2-4-.5-9 1-13 4z" fill="none" stroke="#fff" strokeWidth="1.700" /></svg> },
];

function Taskbar() {
  return (
    <div className="flex h-[53px] shrink-0 items-center border-t border-[#4b4c4d] bg-[linear-gradient(90deg,#252b30,#2a2a2a_24%,#292929_38%,#252b2f_50%,#252b2f_70%,#2a2828_78%,#292929)] pt-px font-['Open_Sans',sans-serif] text-white">
      <svg viewBox="0 0 28 28" className="ml-[552.500px] h-[28px] w-[28px] shrink-0">
        <defs><linearGradient id="win" x1="0" y1="0" x2="1" y2="1"><stop offset="0" stopColor="#7fe3fb" /><stop offset="1" stopColor="#109bf0" /></linearGradient></defs>
        <path d="M0 0h13.300v13.300H0zM14.700 0H28v13.300H14.700zM0 14.700h13.300V28H0zM14.700 14.700H28V28H14.700z" fill="url(#win)" />
      </svg>
      <div className="ml-[14.500px] flex h-[37px] w-[252px] shrink-0 items-center rounded-full border-t border-[#666] bg-[#474747] pl-[12px] text-[15px] text-[#d6d6d6]">
        <Search className="h-[19px] w-[19px]" strokeWidth={2.4} />
        <span className="ml-[11px]"><Fit w={48}>Search</Fit></span>
      </div>
      <div className="ml-[2.500px] flex shrink-0">
        {TASKS.map((t) => (
          <div key={t.k} className="relative flex h-[46px] w-[50.800px] items-center justify-center">
            {t.active && <span className="absolute inset-x-[2.500px] inset-y-0 rounded-[5px] border-t border-white/15 bg-white/10" />}
            <span className="relative">{t.el}</span>
            {t.dot && <span className="absolute -bottom-px h-[3px] w-[7px] rounded-full bg-[#9b9b9b]" />}
            {t.active && <span className="absolute -bottom-px h-[3px] w-[18px] rounded-full bg-[#4cc2ff]" />}
          </div>
        ))}
      </div>
      <div className="ml-auto flex items-center pr-[23px]">
        <ChevronUp className="h-[18px] w-[18px]" strokeWidth={2.4} />
        <svg viewBox="0 0 22 24" className="ml-[19px] h-[24px] w-[20px]">
          <path d="M1 4c4 0 6-1 8-3 3 2 5 3 9 3 0 8-2 13-9 16C3 17 1 12 1 4z" fill="#2f9be8" />
          <path d="M9.500 1v19C3 17 1 12 1 10h17V4c-4 0-6-1-8.500-3z" fill="#1663b5" />
          <circle cx="15" cy="18" r="5.500" fill="#13933a" />
          <path d="m12.500 18 2 2 3.200-3.500" fill="none" stroke="#fff" strokeWidth="1.500" />
        </svg>
        <span className="ml-[20px] text-[14px]"><Fit w={27}>ENG</Fit></span>
        <svg viewBox="0 0 20 20" className="ml-[21px] h-[19px] w-[20px]" fill="none" stroke="#fff" strokeWidth="1.400">
          <path d="M13 2H1v13h14v-4M5 18.500h7M8.500 15v3.500" />
          <rect x="14" y="1.500" width="5" height="6" rx="1" />
          <path d="M16.500 7.500V12" />
        </svg>
        <Volume2 className="ml-[7px] h-[19px] w-[19px]" strokeWidth={1.7} />
        <div className="ml-[20px] flex w-[64px] flex-col items-end text-[14px] leading-[18.500px]">
          <Fit w={45}>1:21 μμ</Fit>
          <Fit w={64}>1/10/2023</Fit>
        </div>
        <Bell className="ml-[7px] h-[18px] w-[18px]" strokeWidth={1.9} />
      </div>
    </div>
  );
}

export default function App() {
  return (
    <div className="flex h-[1439px] w-[2559px] flex-col overflow-hidden bg-[#f0f2f5]">
      <BrowserChrome />
      <div className="relative flex h-[1223px] overflow-hidden bg-[#f0f2f5] font-['Roboto',sans-serif]">
        <Sidebar />
        <main className="ml-[37px] w-[2189px] shrink-0 pt-[57px]">
          <div className="grid h-[193px] grid-cols-6 items-start gap-[28px]">
            {STATS.map((s) => <StatCard key={s.label} s={s} />)}
          </div>
          <div className="mt-[46px] grid grid-cols-3 gap-x-[28px] gap-y-[83px]">
            {CHARTS.map((c) => <ChartCard key={c.id} c={c} />)}
          </div>
        </main>
        <div className="ml-auto flex w-[8px] bg-[#c6c7c9] pl-[3px] pt-[12px]">
          <div className="h-[1167px] w-[3px] rounded-full bg-[#858585]" />
        </div>
        <button className="absolute bottom-[35px] right-[34px] flex h-[60px] w-[60px] items-center justify-center rounded-full bg-white text-[#344767] shadow-[0_4px_14px_rgba(0,0,0,0.25)]">
          <MdSettings className="h-[23px] w-[23px]" />
        </button>
      </div>
      <Taskbar />
    </div>
  );
}
